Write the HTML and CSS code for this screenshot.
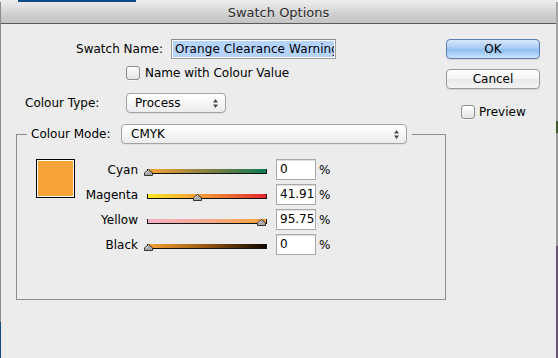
FILE: index.html
```html
<!DOCTYPE html>
<html lang="en">
<head>
<meta charset="utf-8">
<title>Swatch Options</title>
<link rel="stylesheet" href="styles.css">
</head>
<body>
<div class="desk">
  <div class="top-strip"><div class="top-bar"></div></div>
  <div class="desk-row">
    <div class="edge-left"></div>
    <div class="dialog">
      <div class="titlebar">Swatch Options</div>
      <div class="dialog-body">
        <div class="main">
          <div class="name-row">
            <span class="name-label">Swatch Name:</span>
            <div class="text-input"><span class="selected-text">Orange Clearance Warning</span></div>
          </div>
          <div class="check-row">
            <span class="checkbox"></span>
            <span>Name with Colour Value</span>
          </div>
          <div class="type-row">
            <span class="type-label">Colour Type:</span>
            <div class="popup popup-type">
              <span>Process</span>
              <svg class="arrows" width="5" height="9" viewBox="0 0 5 9"><polygon points="0,3.5 2.5,0 5,3.5" fill="#4a4a4a"/><polygon points="0,5.5 2.5,9 5,5.5" fill="#4a4a4a"/></svg>
            </div>
          </div>
          <fieldset class="mode-group">
            <legend class="mode-legend">
              <div class="legend-inner">
                <span class="mode-label">Colour Mode:</span>
                <div class="popup popup-mode">
                  <span>CMYK</span>
                  <svg class="arrows" width="5" height="9" viewBox="0 0 5 9"><polygon points="0,3.5 2.5,0 5,3.5" fill="#4a4a4a"/><polygon points="0,5.5 2.5,9 5,5.5" fill="#4a4a4a"/></svg>
                </div>
              </div>
            </legend>
            <div class="mode-content">
              <div class="swatch"></div>
              <div class="channels">
                <div class="channel">
                  <span class="channel-label">Cyan</span>
                  <div class="slider">
                    <div class="slider-bar bar-cyan"></div>
                    <svg class="thumb" style="left:-3px" width="9" height="7" viewBox="0 0 9 7"><polygon points="0.5,6.5 0.5,3.8 4.5,0.5 8.5,3.8 8.5,6.5" fill="#a8a8a8" stroke="#333" stroke-width="1"/><line x1="1.5" y1="4.2" x2="4.5" y2="1.7" stroke="#e6e6e6" stroke-width="1"/></svg>
                  </div>
                  <div class="field">0</div>
                  <span class="pct">%</span>
                </div>
                <div class="channel">
                  <span class="channel-label">Magenta</span>
                  <div class="slider">
                    <div class="slider-bar bar-magenta"></div>
                    <svg class="thumb" style="left:46px" width="9" height="7" viewBox="0 0 9 7"><polygon points="0.5,6.5 0.5,3.8 4.5,0.5 8.5,3.8 8.5,6.5" fill="#a8a8a8" stroke="#333" stroke-width="1"/><line x1="1.5" y1="4.2" x2="4.5" y2="1.7" stroke="#e6e6e6" stroke-width="1"/></svg>
                  </div>
                  <div class="field">41.91</div>
                  <span class="pct">%</span>
                </div>
                <div class="channel">
                  <span class="channel-label">Yellow</span>
                  <div class="slider">
                    <div class="slider-bar bar-yellow"></div>
                    <svg class="thumb" style="left:110px" width="9" height="7" viewBox="0 0 9 7"><polygon points="0.5,6.5 0.5,3.8 4.5,0.5 8.5,3.8 8.5,6.5" fill="#a8a8a8" stroke="#333" stroke-width="1"/><line x1="1.5" y1="4.2" x2="4.5" y2="1.7" stroke="#e6e6e6" stroke-width="1"/></svg>
                  </div>
                  <div class="field">95.75</div>
                  <span class="pct">%</span>
                </div>
                <div class="channel">
                  <span class="channel-label">Black</span>
                  <div class="slider">
                    <div class="slider-bar bar-black"></div>
                    <svg class="thumb" style="left:-3px" width="9" height="7" viewBox="0 0 9 7"><polygon points="0.5,6.5 0.5,3.8 4.5,0.5 8.5,3.8 8.5,6.5" fill="#a8a8a8" stroke="#333" stroke-width="1"/><line x1="1.5" y1="4.2" x2="4.5" y2="1.7" stroke="#e6e6e6" stroke-width="1"/></svg>
                  </div>
                  <div class="field">0</div>
                  <span class="pct">%</span>
                </div>
              </div>
            </div>
          </fieldset>
        </div>
        <div class="side">
          <div class="button button-default">OK</div>
          <div class="button">Cancel</div>
          <div class="preview-row">
            <span class="checkbox"></span>
            <span>Preview</span>
          </div>
        </div>
      </div>
    </div>
    <div class="edge-right"></div>
  </div>
</div>
</body>
</html>
```
FILE: styles.css
```css
* { box-sizing: border-box; }

html, body {
  margin: 0;
  padding: 0;
  width: 558px;
  height: 358px;
  overflow: hidden;
}

body {
  font-family: "DejaVu Sans", "Liberation Sans", sans-serif;
  font-size: 12px;
  color: #000;
  background: #e8e8e8;
}

.desk {
  display: flex;
  flex-direction: column;
  width: 558px;
  height: 358px;
}

.top-strip {
  height: 2px;
  background: #ececec;
  display: flex;
}

.top-bar {
  margin-left: 18px;
  width: 118px;
  height: 2px;
  background: #0c4a86;
}

.desk-row {
  display: flex;
  height: 356px;
}

.edge-left {
  width: 1px;
  background: linear-gradient(to bottom, #8c8c8c 0, #8c8c8c 320px, #184a7c 320px);
}

.edge-right {
  width: 2px;
  background: linear-gradient(to bottom,
    #a4a4a4 0, #a4a4a4 119px,
    #3d5a2b 119px, #3d5a2b 131px,
    #9a9a9a 131px, #9a9a9a 244px,
    #6c5272 244px);
}

.dialog {
  width: 555px;
  height: 356px;
  background: #ececec;
  display: flex;
  flex-direction: column;
  border-top-left-radius: 4px;
  border-top-right-radius: 4px;
  overflow: hidden;
}

.titlebar {
  height: 22px;
  border-bottom: 1px solid #595959;
  background: linear-gradient(to bottom, #ebebeb, #cfcfcf 60%, #c4c4c4);
  text-align: center;
  font-size: 13px;
  line-height: 21px;
  color: #2a2a2a;
  text-shadow: 0 1px 0 rgba(255,255,255,0.5);
}

.dialog-body {
  display: flex;
  flex: 1;
}

.main {
  width: 445px;
  display: flex;
  flex-direction: column;
}

.name-row {
  display: flex;
  align-items: center;
  margin-top: 15px;
}

.name-label {
  width: 162px;
  text-align: right;
}

.text-input {
  margin-left: 8px;
  width: 165px;
  height: 20px;
  border: 1px solid #9d9d9d;
  border-top-color: #8a8a8a;
  background: #fff;
  padding: 1px;
  overflow: hidden;
}

.selected-text {
  display: block;
  height: 16px;
  line-height: 16px;
  background: #b4d4fd;
  padding-left: 2px;
  letter-spacing: 0.1px;
  white-space: nowrap;
  overflow: hidden;
}

.check-row {
  display: flex;
  align-items: center;
  margin-top: 7px;
  margin-left: 125px;
  height: 14px;
  gap: 5px;
}

.checkbox {
  display: inline-block;
  width: 14px;
  height: 14px;
  border: 1px solid #8d8d8d;
  border-radius: 3px;
  background: linear-gradient(to bottom, #ffffff, #f1f1f1 50%, #e4e4e4);
  box-shadow: 0 1px 0 rgba(255,255,255,0.6);
  flex: 0 0 auto;
}

.type-row {
  display: flex;
  align-items: center;
  margin-top: 13px;
}

.type-label {
  margin-left: 24px;
  width: 101px;
}

.popup {
  height: 20px;
  border: 1px solid #a3a3a3;
  border-radius: 4px;
  background: linear-gradient(to bottom, #ffffff, #f6f6f6 50%, #ececec);
  display: flex;
  align-items: center;
  justify-content: space-between;
  padding: 0 7px 0 8px;
  box-shadow: 0 1px 0 rgba(0,0,0,0.05);
}

.popup-type {
  width: 100px;
}

.popup-mode {
  width: 286px;
  padding-left: 9px;
}

.arrows {
  display: block;
}

.mode-group {
  margin: 11px 0 0 15px;
  width: 430px;
  padding: 0 0 44px 10px;
  border: 1px solid #8e8e8e;
  min-inline-size: 0;
}

.mode-legend {
  padding: 0 5px 0 4px;
}

.legend-inner {
  display: flex;
  align-items: center;
  height: 20px;
}

.mode-label {
  width: 90px;
}

.mode-content {
  display: flex;
  margin-top: 15px;
}

.swatch {
  margin-left: 9px;
  width: 39px;
  height: 39px;
  border: 1px solid #000;
  box-shadow: inset 0 0 0 1px #fff;
  background: #f7a234;
}

.channels {
  display: flex;
  flex-direction: column;
  gap: 4px;
}

.channel {
  display: flex;
  align-items: center;
  height: 21px;
}

.channel-label {
  width: 63px;
  text-align: right;
}

.slider {
  position: relative;
  margin-left: 9px;
  width: 120px;
  height: 21px;
}

.slider-bar {
  margin-top: 10px;
  height: 5px;
  border: 1px solid #111;
  border-top: none;
}

.bar-cyan { background: linear-gradient(to right, #f7a234, #7b7d44 55%, #0b7a52); }
.bar-magenta { background: linear-gradient(to right, #fbe924, #f5a233 40%, #ec6a30 70%, #e8232f); }
.bar-yellow { background: linear-gradient(to right, #f4b2c6, #f4a78f 50%, #f7a234); }
.bar-black { background: linear-gradient(to right, #f7a234, #a05f14 45%, #0e0500); }

.thumb {
  position: absolute;
  top: 10px;
  display: block;
}

.field {
  margin-left: 9px;
  width: 40px;
  height: 21px;
  border: 1px solid #a8a8a8;
  box-shadow: inset 0 1px 0 #e0e0e0;
  background: #fff;
  padding-left: 3px;
  line-height: 19px;
  white-space: nowrap;
  overflow: hidden;
}

.pct {
  margin-left: 3px;
}

.side {
  display: flex;
  flex-direction: column;
  padding-top: 15px;
}

.button {
  width: 94px;
  height: 20px;
  border: 1px solid #9a9a9a;
  border-radius: 4px;
  background: linear-gradient(to bottom, #ffffff, #f4f4f4 50%, #e9e9e9 51%, #f3f3f3);
  text-align: center;
  line-height: 18px;
  margin-bottom: 10px;
  box-shadow: 0 1px 1px rgba(0,0,0,0.1);
}

.button-default {
  border-color: #5f7fb4;
  background: linear-gradient(to bottom, #d6e7fb, #a9cdf5 45%, #8dbdf1 55%, #b5d7f8 85%, #cfe5fb);
}

.preview-row {
  display: flex;
  align-items: center;
  gap: 4px;
  margin-top: 6px;
  margin-left: 15px;
  height: 14px;
}
```
